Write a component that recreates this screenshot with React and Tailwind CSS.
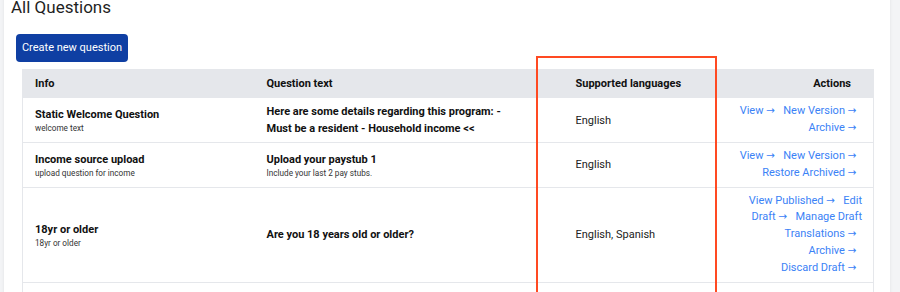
import React from "react";

const Arrow = () => (
  <span
    style={{ fontFamily: "'DejaVu Sans', sans-serif" }}
    className="text-[10.5px] leading-none"
  >
    →
  </span>
);

const Item = ({ t, arrow }) => (
  <a href="#" className={"text-[#3b82f6] no-underline " + (arrow ? "mr-[5.5px]" : "")}>
    {t}
    {arrow && (
      <>
        {" "}
        <Arrow />
      </>
    )}
  </a>
);

export default function App() {
  const rows = [
    {
      name: "Static Welcome Question",
      sub: "welcome text",
      q: (
        <>
          Here are some details regarding this program: -<br />
          Must be a resident - Household income &lt;&lt;
        </>
      ),
      qsub: null,
      langs: "English",
      lines: [
        [["View", true], ["New Version", true]],
        [["Archive", true]],
      ],
    },
    {
      name: "Income source upload",
      sub: "upload question for income",
      q: "Upload your paystub 1",
      qsub: "Include your last 2 pay stubs.",
      langs: "English",
      lines: [
        [["View", true], ["New Version", true]],
        [["Restore Archived", true]],
      ],
    },
    {
      name: "18yr or older",
      sub: "18yr or older",
      q: "Are you 18 years old or older?",
      qsub: null,
      langs: "English, Spanish",
      lines: [
        [["View Published", true], ["Edit", false]],
        [["Draft", true], ["Manage Draft", false]],
        [["Translations", true]],
        [["Archive", true]],
        [["Discard Draft", true]],
      ],
    },
  ];

  return (
    <div
      className="relative h-[292px] w-[900px] overflow-hidden bg-[#f3f4f6]"
      style={{ fontFamily: "Roboto, 'Liberation Sans', sans-serif" }}
    >
      <div className="ml-[4px] w-[886px] h-[400px] bg-white shadow-[0_0_3px_rgba(0,0,0,0.08)]">
        <h1 className="ml-[7px] mt-[-5px] text-[17px] leading-[24px] font-normal text-[#1f1f1f]">
          All Questions
        </h1>
        <button className="block ml-[12px] mt-[15px] h-[28px] w-[112px] rounded-[4px] bg-[#0f3fa3] text-white text-[11px] leading-[14px]">
          Create new question
        </button>
        <table className="ml-[18px] mt-[7px] w-[851px] table-fixed border-collapse border border-[#e5e7eb] text-[11px] text-[#111]">
          <colgroup>
            <col style={{ width: 232 }} />
            <col style={{ width: 309 }} />
            <col style={{ width: 160 }} />
            <col style={{ width: 150 }} />
          </colgroup>
          <thead>
            <tr className="h-[28px] bg-[#e5e7eb]">
              <th className="px-3 text-left font-bold leading-[17px]">Info</th>
              <th className="px-3 text-left font-bold leading-[17px]">Question text</th>
              <th className="px-3 text-left font-bold leading-[17px]">Supported languages</th>
              <th className="pl-3 pr-[22px] text-right font-bold leading-[17px]">Actions</th>
            </tr>
          </thead>
          <tbody>
            {rows.map((r, i) => (
              <tr key={i} className="border-t border-[#e5e7eb]">
                <td className="px-3 py-[5px] align-middle">
                  <div className="font-bold leading-[17px]">{r.name}</div>
                  <div className="text-[8.2px] leading-[11px] text-[#333]">{r.sub}</div>
                </td>
                <td className="px-3 py-[5px] align-middle">
                  <div className="font-bold leading-[17px]">{r.q}</div>
                  {r.qsub && (
                    <div className="text-[8.2px] leading-[11px] text-[#333]">{r.qsub}</div>
                  )}
                </td>
                <td className="px-3 py-[5px] align-middle leading-[17px] text-[#222]">
                  {r.langs}
                </td>
                <td className="pl-3 pr-[11px] py-[5px] align-middle text-right leading-[16.8px]">
                  {r.lines.map((line, j) => (
                    <div key={j} className="whitespace-nowrap">
                      {line.map(([t, arrow], k) => (
                        <React.Fragment key={k}>
                          {k > 0 && " "}
                          <Item t={t} arrow={arrow} />
                        </React.Fragment>
                      ))}
                    </div>
                  ))}
                </td>
              </tr>
            ))}
            <tr className="border-t border-[#e5e7eb] h-[40px]">
              <td colSpan={4}></td>
            </tr>
          </tbody>
        </table>
      </div>
      <div className="absolute left-[536px] top-[56px] h-[260px] w-[181px] border-2 border-[#ff4a22]"></div>
    </div>
  );
}
